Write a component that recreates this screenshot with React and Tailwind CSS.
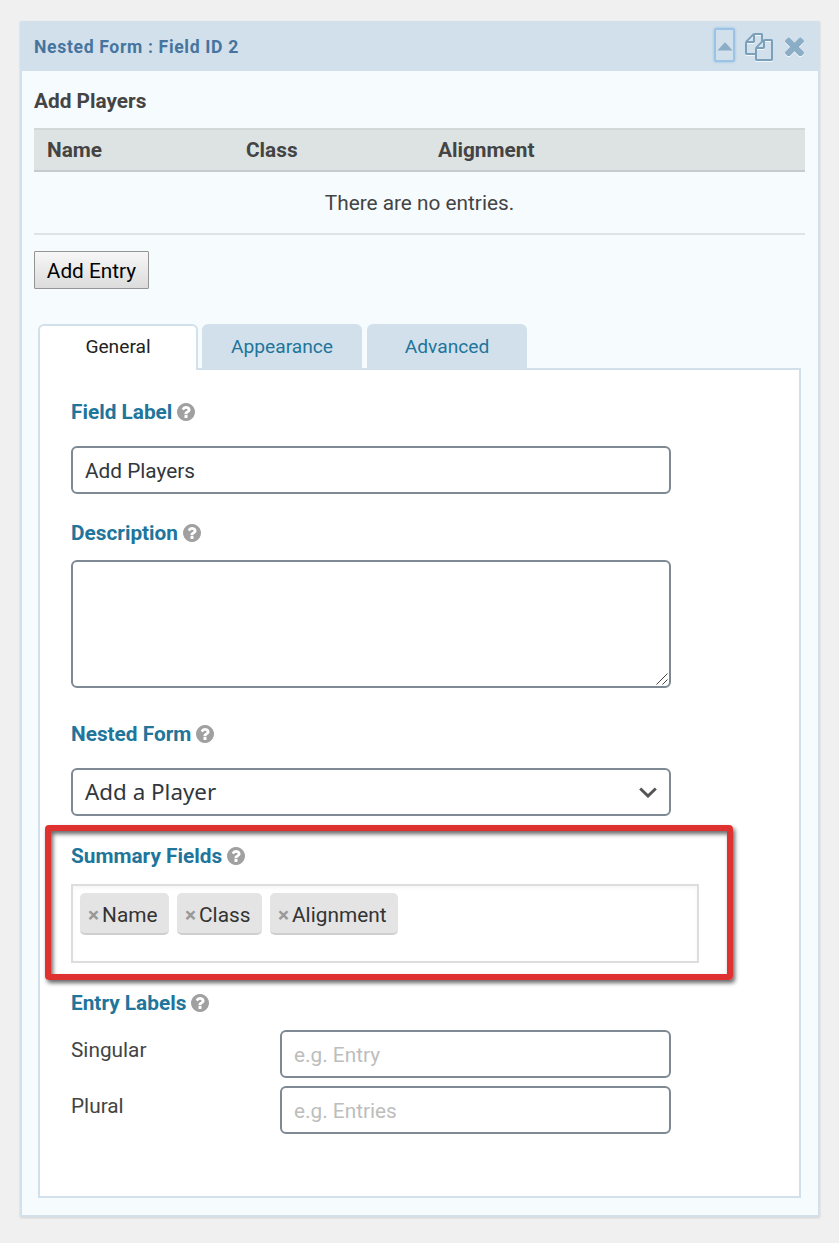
import { useState } from "react";

const columns = [
  { label: "Name", width: "w-[199px]" },
  { label: "Class", width: "w-[192px]" },
  { label: "Alignment", width: "w-[367px]" },
];

const summaryFields = [
  { label: "Name", width: "w-[89px]" },
  { label: "Class", width: "w-[85px]" },
  { label: "Alignment", width: "w-[128px]" },
];

const entryLabels = [
  { label: "Singular", placeholder: "e.g. Entry" },
  { label: "Plural", placeholder: "e.g. Entries" },
];

function CopyIcon() {
  return (
    <svg viewBox="0 0 1792 1792" className="mt-[2px] h-7 w-7 fill-[#7ba0bb] drop-shadow-[0_1px_0_#f1f6fa]">
      <path d="M1696 384q40 0 68 28t28 68v1216q0 40-28 68t-68 28h-960q-40 0-68-28t-28-68v-288h-544q-40 0-68-28t-28-68v-672q0-40 20-88t48-76l408-408q28-28 76-48t88-20h416q40 0 68 28t28 68v328q68-40 128-40h416zm-544 213l-299 299h299v-299zm-640-384l-299 299h299v-299zm196 647l316-316v-416h-384v416q0 40-28 68t-68 28h-416v640h512v-256q0-40 20-88t48-76zm956 804v-1152h-384v416q0 40-28 68t-68 28h-416v640h896z" />
    </svg>
  );
}

function CloseIcon() {
  return (
    <svg viewBox="302 270 1188 1188" className="h-[19px] w-[19px] fill-[#8badc6] drop-shadow-[0_1px_0_#f1f6fa]">
      <path d="M1490 1258q0 40-28 68l-136 136q-28 28-68 28t-68-28l-294-294-294 294q-28 28-68 28t-68-28l-136-136q-28-28-28-68t28-68l294-294-294-294q-28-28-28-68t28-68l136-136q28-28 68-28t68 28l294 294 294-294q28-28 68-28t68 28l136 136q28 28 28 68t-28 68l-294 294 294 294q28 28 28 68z" />
    </svg>
  );
}

function HelpIcon() {
  return (
    <svg viewBox="128 128 1536 1536" className="h-[18px] w-[18px] fill-[#a0a0a0]">
      <path d="M1024 1376v-192q0-14-9-23t-23-9h-192q-14 0-23 9t-9 23v192q0 14 9 23t23 9h192q14 0 23-9t9-23zm256-672q0-88-55.5-163t-138.5-116-170-41q-243 0-371 213-15 24 8 42l132 100q7 6 19 6 16 0 25-12 53-68 86-92 34-24 86-24 48 0 85.5 26t37.5 59q0 38-20 61t-68 45q-63 28-115.5 86.5t-52.5 125.5v36q0 14 9 23t23 9h192q14 0 23-9t9-23q0-19 21.5-49.5t54.5-49.5q32-18 49-28.5t46-35 44.5-48 28-60.5 12.5-81zm384 192q0 209-103 385.5t-279.5 279.5-385.5 103-385.5-103-279.5-279.5-103-385.5 103-385.5 279.5-279.5 385.5-103 385.5 103 279.5 279.5 103 385.5z" />
    </svg>
  );
}

function SectionLabel({ children }) {
  return (
    <div className="flex h-[30px] items-center gap-[5px] text-[20.8px] font-bold text-[#21759b]">
      <span className="pt-px">{children}</span>
      <HelpIcon />
    </div>
  );
}

function Tab({ label, active, onClick }) {
  return (
    <button
      onClick={onClick}
      className={
        active
          ? "mr-1 h-[46px] w-40 rounded-t-md border-2 border-b-0 border-[#d2e0eb] bg-white pb-[2px] text-[19.2px] text-[#222]"
          : "mr-[5px] h-[46px] w-40 rounded-t-md bg-[#d2e0eb] text-[19.2px] text-[#21759b]"
      }
    >
      {label}
    </button>
  );
}

export default function App() {
  const [tab, setTab] = useState("General");
  const [fieldLabel, setFieldLabel] = useState("Add Players");

  return (
    <div className="h-[1243px] w-[839px] bg-[#f0f0f0] px-5 pt-[21px] font-['Roboto',sans-serif] text-[20.8px] text-[#444]">
      <div className="flex h-[1196px] w-[800px] flex-col border-2 border-t-0 border-[#d2e0eb] bg-[#f6fbfe] shadow-[0_1px_2px_rgba(0,0,0,0.12)]">
        <div className="flex h-[50px] shrink-0 items-center bg-[#d2e0eb] pl-3 pr-[14px]">
          <span className="mt-[2px] flex-1 text-[17.6px] font-bold tracking-[0.65px] text-[#45759f]">
            Nested Form : Field ID 2
          </span>
          <div className="-mt-[3px] mr-[10px] flex h-[34px] w-[21px] items-center justify-center rounded-[2px] border-2 border-[#9bc3e6] shadow-[0_0_3px_#8fc0e8]">
            <svg viewBox="0 0 16 9" className="mt-[3px] h-[9px] w-4 shrink-0 fill-[#8badc6]">
              <path d="M0.4 8.6L7.2 1Q8 .2 8.8 1L15.6 8.6z" />
            </svg>
          </div>
          <CopyIcon />
          <div className="ml-3">
            <CloseIcon />
          </div>
        </div>

        <div className="pl-3 pr-[13px] pt-[15px]">
          <div className="h-[42px] font-bold leading-[30px]">Add Players</div>
          <div className="flex h-11 items-center border-y-2 border-t-[#d0d8d8] border-b-[#c4cccd] bg-[#dde3e2] pt-px pl-[13px] font-bold">
            {columns.map((col) => (
              <span key={col.label} className={col.width}>{col.label}</span>
            ))}
          </div>
          <div className="flex h-[63px] items-center justify-center border-b-2 border-[#dee3e6] pt-[2px]">
            There are no entries.
          </div>
          <button className="mt-4 block h-[38px] w-[115px] rounded-[1px] border border-[#949494] bg-linear-to-b from-[#f7f7f7] to-[#dcdcdc] pt-[3px] text-[20.8px] leading-[31px] text-black">
            Add Entry
          </button>
        </div>

        <div className="relative z-10 mt-[35px] ml-4 flex">
          {["General", "Appearance", "Advanced"].map((name) => (
            <Tab key={name} label={name} active={tab === name} onClick={() => setTab(name)} />
          ))}
        </div>

        <div className="relative -mt-[2px] ml-4 h-[830px] w-[763px] border-2 border-[#d2e0eb] bg-white pl-[31px] pt-[27px]">
          <SectionLabel>Field Label</SectionLabel>
          <input
            value={fieldLabel}
            onChange={(e) => setFieldLabel(e.target.value)}
            className="mt-[19px] block h-12 w-[600px] rounded-md border-2 border-[#7e8993] bg-white px-3 pt-px text-[20.8px] text-[#32373c]"
          />

          <div className="mt-6">
            <SectionLabel>Description</SectionLabel>
          </div>
          <div className="relative mt-3 h-32 w-[600px]">
            <textarea className="block h-32 w-[600px] resize-none rounded-md border-2 border-[#7e8993] bg-white" />
            <svg viewBox="0 0 12 12" className="absolute right-[3px] bottom-[3px] h-3 w-3 fill-none stroke-[#444]">
              <path d="M0.5 11.5L11.5 .5M6.5 11.5L11.5 6.5" />
            </svg>
          </div>

          <div className="mt-[31px]">
            <SectionLabel>Nested Form</SectionLabel>
          </div>
          <div className="mt-[19px] flex h-12 w-[600px] items-center justify-between rounded-md border-2 border-[#7e8993] px-3 font-['Noto_Sans',sans-serif] text-[22.4px] text-[#32373c]">
            <span>Add a Player</span>
            <svg viewBox="0 0 18 11" className="h-[11px] w-[18px] fill-none stroke-[#555]" strokeWidth="3">
              <path d="M1.2 1.5L9 9l7.8-7.5" />
            </svg>
          </div>

          <div className="mt-[25px]">
            <SectionLabel>Summary Fields</SectionLabel>
          </div>
          <div className="mt-[13px] flex h-[79px] w-[628px] gap-2 border-2 border-[#ddd] bg-white px-[7px] pt-[7px] shadow-[inset_0_2px_4px_rgba(0,0,0,0.04)]">
            {summaryFields.map((field) => (
              <div
                key={field.label}
                className={`flex h-[42px] items-center rounded-[5px] border-b-2 border-[#cfcfcf] bg-[#e4e4e4] pt-[5px] pl-2 text-[#333] ${field.width}`}
              >
                <span className="mr-[3px] text-[20.8px] font-bold text-[#999]">×</span>
                <span>{field.label}</span>
              </div>
            ))}
          </div>

          <div className="mt-[25px]">
            <SectionLabel>Entry Labels</SectionLabel>
          </div>
          <div className="mt-3 flex flex-col gap-2">
            {entryLabels.map((entry) => (
              <div key={entry.label} className="flex">
                <label className="w-[209px] pt-[5px] leading-[30px]">{entry.label}</label>
                <input
                  placeholder={entry.placeholder}
                  className="block h-12 w-[391px] rounded-md border-2 border-[#7e8993] bg-white px-3 pt-px text-[20.8px] placeholder:text-[#bdbdbd]"
                />
              </div>
            ))}
          </div>

          {/* highlight around the summary fields */}
          <div className="pointer-events-none absolute left-[5px] top-[455px] h-[155px] w-[688px] rounded-[4px] border-6 border-[#e03131] shadow-[2px_3px_4px_rgba(0,0,0,0.6),inset_2px_3px_4px_rgba(0,0,0,0.6)]" />
        </div>
      </div>
    </div>
  );
}
